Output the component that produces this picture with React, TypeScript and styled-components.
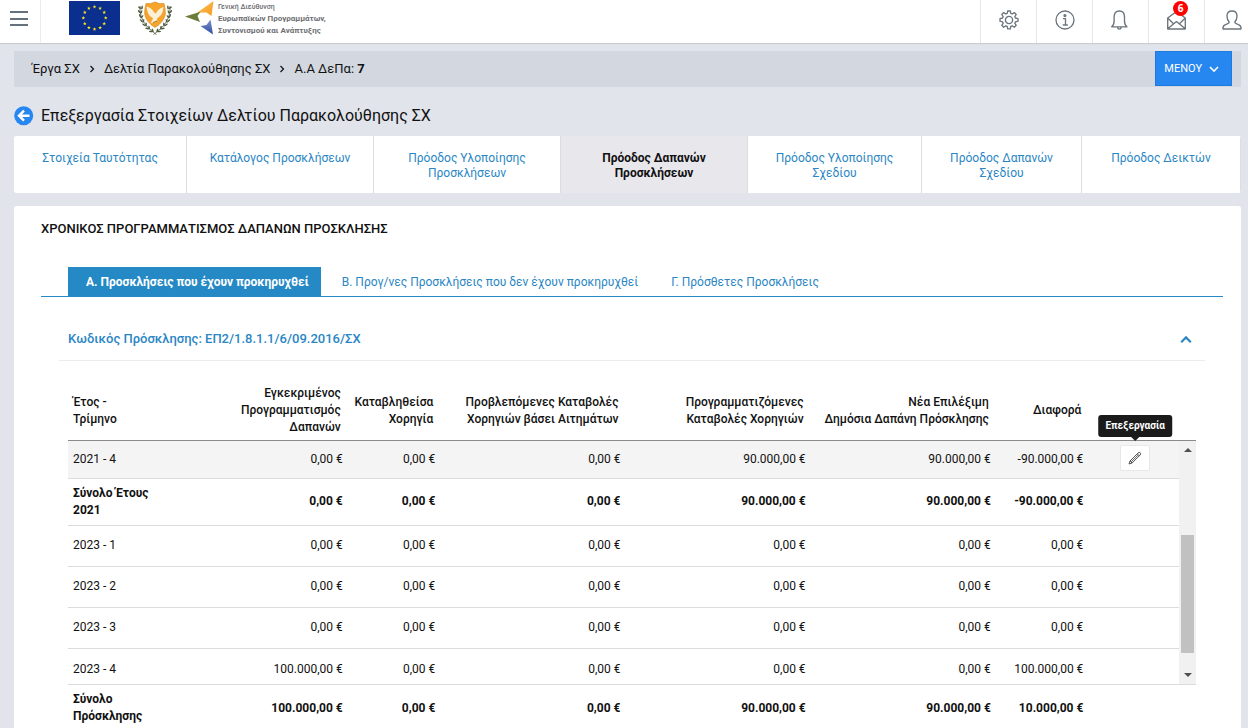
import React from "react";
import styled, { createGlobalStyle } from "styled-components";

const GlobalStyle = createGlobalStyle`
  *, *::before, *::after { box-sizing: border-box; }
  html, body { margin: 0; padding: 0; }
  body {
    background: #e1e4eb;
    color: #111;
    font-family: Roboto, "Liberation Sans", sans-serif;
    font-size: 12px;
    line-height: 17px;
  }
  button { font-family: inherit; cursor: pointer; }
  a { text-decoration: none; color: inherit; }
  h1, h2, h3 { margin: 0; }
`;

/* ---------- top bar ---------- */

const TopBar = styled.header`
  display: flex;
  align-items: stretch;
  height: 43px;
  background: #fff;
  box-shadow: 0 1px 1px #c8cdd2;
`;

const MenuToggle = styled.button`
  display: flex;
  align-items: center;
  width: 41px;
  padding: 0 0 5px 10px;
  border: 0;
  border-right: 1px solid #eaecef;
  background: none;
`;

const Logos = styled.div`
  display: flex;
  flex: 1;
  align-items: flex-start;
  padding: 1px 0 0 28px;
`;

const EmblemBox = styled.div`
  display: flex;
  margin: 0 13px 0 18px;
`;

const Directorate = styled.a`
  display: flex;
  gap: 4px;
`;

const DirectorateName = styled.div`
  color: #6d6e71;
  font-size: 8px;
  font-weight: 700;
  line-height: 12px;
  white-space: nowrap;
`;

const DirectorateSmall = styled.div`
  font-size: 7px;
  font-weight: 500;
`;

const Actions = styled.nav`
  display: flex;
`;

const Action = styled.button`
  position: relative;
  display: flex;
  align-items: center;
  padding: 0 17px 3px 18px;
  border: 0;
  border-left: 1px solid #e6e8eb;
  background: none;
  color: #6c757d;

  &:last-child { padding: 0 6px 3px 17px; }
`;

const Badge = styled.span`
  position: absolute;
  top: 1px;
  right: 16px;
  width: 15px;
  height: 15px;
  border-radius: 8px;
  background: #f00;
  color: #fff;
  font-family: "Open Sans", sans-serif;
  font-size: 10px;
  font-weight: 700;
  line-height: 15px;
  text-align: center;
`;

/* ---------- page ---------- */

const Page = styled.main`
  padding: 8px 7px 0 14px;
`;

const CrumbBar = styled.div`
  display: flex;
  justify-content: space-between;
  height: 36px;
  padding: 0 9px 0 18px;
  background: #d3d7df;
`;

const Crumbs = styled.nav`
  display: flex;
  align-items: center;
  gap: 7px;
  padding-bottom: 1px;
  font-size: 13px;
  white-space: nowrap;
`;

const MenuButton = styled.button`
  display: flex;
  align-items: center;
  gap: 7px;
  height: 35px;
  padding: 0 12px 0 8px;
  border: 1px solid #1f7ae0;
  background: #2787f0;
  color: #fff;
  font-size: 11px;
`;

const TitleRow = styled.div`
  display: flex;
  align-items: center;
  gap: 7px;
  height: 49px;
  padding-top: 9px;
`;

const BackLink = styled.a`
  display: flex;
`;

const Title = styled.h1`
  font-size: 16px;
  font-weight: 400;
  line-height: 24px;
`;

const StepTabs = styled.nav`
  display: grid;
  grid-template-columns: 173fr 187fr 187fr 187fr 174fr 160fr 159fr;
  min-height: 57px;
  border-radius: 3px;
  background: #fff;
  overflow: hidden;
`;

const StepTab = styled.a<{ $active?: boolean }>`
  padding: 15px 20px 12px;
  border-right: 1px solid #dcdde1;
  background: ${(p) => (p.$active ? "#e8e7ec" : "#fff")};
  color: ${(p) => (p.$active ? "#111" : "#2a86c4")};
  font-weight: ${(p) => (p.$active ? 700 : 400)};
  line-height: 15px;
  text-align: center;
`;

const Line = styled.span`
  display: block;
`;

const Panel = styled.section`
  margin-top: 13px;
  padding: 14px 18px 0 27px;
  border-radius: 3px 3px 0 0;
  background: #fff;
`;

const PanelTitle = styled.h2`
  font-size: 13px;
  font-weight: 500;
  line-height: 17px;
`;

const SubTabs = styled.div`
  display: flex;
  gap: 3px;
  margin-top: 30px;
  padding-left: 27px;
  border-bottom: 1px solid #2489c5;
`;

const SubTab = styled.button<{ $active?: boolean }>`
  height: 29px;
  padding: 0 12px 0 18px;
  border: 0;
  background: ${(p) => (p.$active ? "#2489c5" : "transparent")};
  color: ${(p) => (p.$active ? "#fff" : "#2a86c4")};
  font-size: 12px;
  font-weight: ${(p) => (p.$active ? 700 : 400)};
`;

const Accordion = styled.div`
  margin: 19px 18px 0;
`;

const AccordionHead = styled.button`
  display: flex;
  align-items: center;
  justify-content: space-between;
  width: 100%;
  height: 45px;
  padding: 0 13px 0 9px;
  border: 0;
  border-bottom: 1px solid #ececec;
  background: none;
  color: #2a86c4;
  font-size: 13px;
  font-weight: 500;
`;

const AccordionBody = styled.div`
  padding: 20px 9px 0;
`;

/* ---------- table ---------- */

const Table = styled.table`
  width: 100%;
  border-collapse: collapse;
  table-layout: fixed;
`;

const HeadArea = styled.div`
  height: 60px;
  padding-right: 17px;
  border-bottom: 1px solid #8a8a8a;
`;

const BodyArea = styled.div`
  display: flex;
`;

const BodyTable = styled.div`
  flex: 1;
  min-width: 0;
`;

const FootArea = styled.div`
  padding-right: 17px;
  border-top: 1px solid #dcdcdc;
`;

const Row = styled.tr<{ $height?: number; $shaded?: boolean; $strong?: boolean; $cut?: boolean }>`
  height: ${(p) => p.$height ?? 41}px;
  background: ${(p) => (p.$shaded ? "#f4f4f4" : "transparent")};
  font-weight: ${(p) => (p.$strong ? 700 : 400)};
  vertical-align: ${(p) => (p.$cut ? "bottom" : "middle")};

  &:not(:last-child) { border-bottom: 1px solid #dcdcdc; }
`;

const Cell = styled.td`
  padding: 6px 3px;
  text-align: right;
  white-space: nowrap;
`;

const ActionCell = styled.td`
  padding: 3px 0 6px 5px;
`;

const RowHead = styled.th`
  padding: 6px 5px;
  font-weight: inherit;
  text-align: left;
`;

const ColHead = styled.th<{ $left?: boolean }>`
  padding: 4px 5px 3px;
  font-weight: 500;
  text-align: ${(p) => (p.$left ? "left" : "right")};
  white-space: nowrap;
`;

const EditWrap = styled.div`
  position: relative;
  display: flex;
  justify-content: center;
`;

const EditButton = styled.button`
  display: flex;
  align-items: center;
  justify-content: center;
  width: 30px;
  height: 26px;
  padding: 0;
  border: 1px solid #e8e8e8;
  border-radius: 2px;
  background: #fff;
`;

const Tooltip = styled.span`
  position: absolute;
  bottom: 34px;
  left: 50%;
  padding: 0 7px;
  border-radius: 3px;
  background: #1b1b1b;
  color: #fff;
  font-size: 10px;
  font-weight: 700;
  line-height: 22px;
  transform: translateX(-50%);

  &::after {
    content: "";
    position: absolute;
    top: 100%;
    left: 50%;
    margin-left: -4px;
    border: 4px solid transparent;
    border-top-color: #1b1b1b;
    border-bottom: 0;
  }
`;

const ScrollTrack = styled.div`
  display: flex;
  flex-direction: column;
  align-items: center;
  justify-content: space-between;
  width: 17px;
  padding: 6px 0;
  background: #f1f1f1;
`;

const ScrollThumb = styled.div`
  width: 13px;
  height: 118px;
  margin-top: 62px;
  background: #c1c1c1;
`;

/* ---------- drawings ---------- */

const Hamburger = () => (
  <svg width="18" height="16" viewBox="0 0 18 16" stroke="#66717b" strokeWidth="2">
    <path d="M0 1h18M0 8h18M0 14h18" />
  </svg>
);

const starPoints = (cx: number, cy: number, r: number) =>
  Array.from({ length: 10 }, (_, i) => {
    const a = (Math.PI / 5) * i - Math.PI / 2;
    const d = i % 2 ? r * 0.4 : r;
    return `${(cx + d * Math.cos(a)).toFixed(2)},${(cy + d * Math.sin(a)).toFixed(2)}`;
  }).join(" ");

const EuFlag = () => (
  <svg width="51" height="34" viewBox="0 0 51 34" role="img" aria-label="EU">
    <rect width="51" height="34" fill="#0a2f8f" />
    {Array.from({ length: 12 }, (_, i) => {
      const a = (Math.PI / 6) * i;
      return (
        <polygon
          key={i}
          fill="#ffe71a"
          points={starPoints(25.5 + 11.2 * Math.sin(a), 17 - 11.2 * Math.cos(a), 2)}
        />
      );
    })}
  </svg>
);

const wreath: Array<[number, number, number]> = [
  [2.5, 6, -30], [2, 10, -10], [3, 14.5, 5], [4, 19, -15], [6.5, 23, -30], [9.5, 26.5, -45], [13, 29.5, -55],
];

const Emblem = () => (
  <svg width="34" height="35" viewBox="0 0 34 35" role="img" aria-label="Κύπρος">
    {[false, true].map((flip) => (
      <g key={String(flip)} transform={flip ? "matrix(-1 0 0 1 34 0)" : undefined}>
        <path d="M2 5C1.5 15 5 24 18.5 33.5" fill="none" stroke="#4c5a3c" strokeWidth="0.8" />
        {wreath.map(([x, y, r], i) => (
          <g key={i} transform={`translate(${x} ${y}) rotate(${r})`} fill="#4f5d3e">
            <ellipse cx="-1" cy="0" rx="0.8" ry="2" transform="rotate(-30)" />
            <ellipse cx="1.6" cy="0.4" rx="0.8" ry="2" transform="rotate(35)" />
          </g>
        ))}
      </g>
    ))}
    <path
      d="M8 2.500Q12.500 3.500 17 1Q21.500 3.500 26 2.500Q27.500 8 27.300 13Q26 21 17 26.500Q8 21 6.700 13Q6.500 8 8 2.500Z"
      fill="#f6a42c"
      stroke="#d98a1c"
      strokeWidth="0.7"
    />
    <path
      d="M8.500 5.500Q14 7 16.200 11.500L18 12.500Q20 7.500 25.500 6Q25 14 19.500 17L18.500 20L12.500 22.500L15 17.500Q9 14 8.500 5.500Z"
      fill="#fdf0d8"
    />
    <path d="M15 21.500l4-1.500" stroke="#8a7a3a" strokeWidth="0.8" />
  </svg>
);

const DirectorateMark = () => (
  <svg width="29" height="35" viewBox="0 0 29 35" aria-hidden="true">
    <defs>
      <linearGradient id="sun" x1="0" y1="0" x2="1" y2="1">
        <stop offset="0" stopColor="#fdc35a" />
        <stop offset="1" stopColor="#f59a1f" />
      </linearGradient>
      <linearGradient id="sea" x1="0" y1="0" x2="0" y2="1">
        <stop offset="0" stopColor="#7d92cc" />
        <stop offset="1" stopColor="#2c4ea0" />
      </linearGradient>
    </defs>
    <path d="M28.500 0L12 11.800L21.500 11.500L26.500 15Z" fill="url(#sun)" />
    <path d="M0 15.500L15.500 10.800L12.500 15L15 21Z" fill="#6b7c38" />
    <path d="M28 33.500L15.500 25L21.500 24L25.500 18.500Z" fill="url(#sea)" />
  </svg>
);

const lineIcon = {
  width: 20,
  height: 20,
  viewBox: "0 0 20 20",
  fill: "none",
  stroke: "currentColor",
  strokeWidth: 1.35,
  strokeLinejoin: "round" as const,
  "aria-hidden": true,
};

const GearIcon = () => (
  <svg {...lineIcon}>
    <circle cx="10" cy="10" r="3.600" />
    <path d="M8.700 1h2.600l.5 2.400 1.400.6 2.100-1.400 1.900 1.900-1.400 2.100.6 1.400 2.600.6v2.600l-2.600.6-.6 1.400 1.400 2.100-1.900 1.900-2.100-1.400-1.400.6-.5 2.500H8.700l-.5-2.500-1.400-.6-2.100 1.400-1.900-1.900 1.400-2.100-.6-1.400L1 11.200V8.600L3.600 8l.6-1.400-1.400-2.100 1.900-1.900L6.800 4l1.400-.6z" />
  </svg>
);

const InfoIcon = () => (
  <svg {...lineIcon}>
    <circle cx="10" cy="10" r="9" />
    <circle cx="9.900" cy="5.600" r="0.900" fill="currentColor" />
    <path d="M8 8.600h2.500v6.200M7.800 15h5" />
  </svg>
);

const BellIcon = () => (
  <svg {...lineIcon} viewBox="1 0 20 20">
    <path d="M1.700 16.800c2-1.500 2.400-3 2.400-5.800V7C4.100 3 6 1 9.300 1s5.200 2 5.200 6v4c0 2.800.4 4.300 2.400 5.800zM7.500 17.200c.3 2.600 3.400 2.600 3.700 0" />
  </svg>
);

const MailIcon = () => (
  <svg {...lineIcon} viewBox="1 0 20 20">
    <path d="M1.700 8L10.500 1.500 19.300 8v11H1.700zM1.700 8l6.300 6.200M19.300 8L13 14.200M2 18.500l8.500-6.900 8.500 6.900" />
  </svg>
);

const UserIcon = () => (
  <svg {...lineIcon}>
    <path d="M1 19c-.3-2.700.6-3.600 2.500-4.300 2.600-.9 3.700-1.400 3.700-2.700-1.500-1.500-2.200-3.700-2.200-6C5 2.600 7 1 10 1s5 1.600 5 5c0 2.300-.7 4.500-2.200 6 0 1.300 1.100 1.800 3.700 2.700 1.900.7 2.800 1.600 2.500 4.300z" />
  </svg>
);

const Chevron = ({ dir, size = 10 }: { dir: "up" | "down" | "right"; size?: number }) => (
  <svg width={size} height={size} viewBox="0 0 10 10" fill="none" stroke="currentColor" aria-hidden="true">
    {dir === "up" && <path d="M1 8.500l4-4 4 4" strokeWidth="1.800" />}
    {dir === "down" && <path d="M1 3l4 4 4-4" strokeWidth="1.600" />}
    {dir === "right" && <path d="M3.500 2l3 3-3 3" strokeWidth="1.200" />}
  </svg>
);

const BackIcon = () => (
  <svg width="20" height="20" viewBox="0 0 20 20" aria-hidden="true">
    <circle cx="9.700" cy="9.700" r="9.500" fill="#2787f0" />
    <path d="M15.500 9.700H5.500M10 4.700l-5 5 5 5" fill="none" stroke="#fff" strokeWidth="2.400" />
  </svg>
);

const PencilIcon = () => (
  <svg width="14" height="14" viewBox="0 0 14 14" fill="none" stroke="#444" strokeWidth="0.900" aria-hidden="true">
    <path d="M1 13l1-3L10 2q1.200-1.100 2.200-.2t-.1 2.200L4.100 12zM2 10l2.100 2M9.200 2.800l2.100 2.100M3.200 10.900L10.200 4" />
  </svg>
);

const ScrollArrow = ({ down }: { down?: boolean }) => (
  <svg width="8" height="6" viewBox="0 0 8 6" fill="#505050" aria-hidden="true">
    <path d={down ? "M0 1h8L4 5z" : "M0 5h8L4 1z"} />
  </svg>
);

/* ---------- data ---------- */

const steps: Array<{ lines: string[]; active?: boolean }> = [
  { lines: ["Στοιχεία Ταυτότητας"] },
  { lines: ["Κατάλογος Προσκλήσεων"] },
  { lines: ["Πρόοδος Υλοποίησης", "Προσκλήσεων"] },
  { lines: ["Πρόοδος Δαπανών", "Προσκλήσεων"], active: true },
  { lines: ["Πρόοδος Υλοποίησης", "Σχεδίου"] },
  { lines: ["Πρόοδος Δαπανών", "Σχεδίου"] },
  { lines: ["Πρόοδος Δεικτών"] },
];

const subTabs = [
  "Α. Προσκλήσεις που έχουν προκηρυχθεί",
  "Β. Προγ/νες Προσκλήσεις που δεν έχουν προκηρυχθεί",
  "Γ. Πρόσθετες Προσκλήσεις",
];

const columns: string[][] = [
  ["Έτος -", "Τρίμηνο"],
  ["Εγκεκριμένος", "Προγραμματισμός", "Δαπανών"],
  ["Καταβληθείσα", "Χορηγία"],
  ["Προβλεπόμενες Καταβολές", "Χορηγιών βάσει Αιτημάτων"],
  ["Προγραμματιζόμενες", "Καταβολές Χορηγιών"],
  ["Νέα Επιλέξιμη", "Δημόσια Δαπάνη Πρόσκλησης"],
  ["Διαφορά"],
];

type Entry = {
  label: string;
  values: string[];
  height?: number;
  strong?: boolean;
  editable?: boolean;
  cut?: boolean;
};

const zero = "0,00 €";

const entries: Entry[] = [
  { label: "2021 - 4", values: [zero, zero, zero, "90.000,00 €", "90.000,00 €", "-90.000,00 €"], height: 37, editable: true },
  { label: "Σύνολο Έτους 2021", values: [zero, zero, zero, "90.000,00 €", "90.000,00 €", "-90.000,00 €"], height: 46, strong: true },
  { label: "2023 - 1", values: [zero, zero, zero, zero, zero, zero] },
  { label: "2023 - 2", values: [zero, zero, zero, zero, zero, zero] },
  { label: "2023 - 3", values: [zero, zero, zero, zero, zero, zero] },
  { label: "2023 - 4", values: ["100.000,00 €", zero, zero, zero, zero, "100.000,00 €"], height: 36, cut: true },
];

const total: Entry = {
  label: "Σύνολο Πρόσκλησης",
  values: ["100.000,00 €", zero, zero, "90.000,00 €", "90.000,00 €", "10.000,00 €"],
  height: 44,
  strong: true,
};

const twelfths = [1, 2, 1, 2, 2, 2, 1, 1];

const Columns = () => (
  <colgroup>
    {twelfths.map((n, i) => (
      <col key={i} style={{ width: `${(n / 12) * 100}%` }} />
    ))}
  </colgroup>
);

const EntryRow = ({ entry }: { entry: Entry }) => (
  <Row $height={entry.height} $shaded={entry.editable} $strong={entry.strong} $cut={entry.cut}>
    <RowHead scope="row">{entry.label}</RowHead>
    {entry.values.map((v, i) => (
      <Cell key={i}>{v}</Cell>
    ))}
    <ActionCell>
      {entry.editable && (
        <EditWrap>
          <EditButton aria-label="Επεξεργασία">
            <PencilIcon />
          </EditButton>
          <Tooltip role="tooltip">Επεξεργασία</Tooltip>
        </EditWrap>
      )}
    </ActionCell>
  </Row>
);

export default function App() {
  return (
    <>
      <GlobalStyle />
      <TopBar>
        <MenuToggle aria-label="Πλοήγηση">
          <Hamburger />
        </MenuToggle>
        <Logos>
          <EuFlag />
          <EmblemBox>
            <Emblem />
          </EmblemBox>
          <Directorate href="#">
            <DirectorateMark />
            <DirectorateName>
              <DirectorateSmall>Γενική Διεύθυνση</DirectorateSmall>
              <div>Ευρωπαϊκών Προγραμμάτων,</div>
              <div>Συντονισμού και Ανάπτυξης</div>
            </DirectorateName>
          </Directorate>
        </Logos>
        <Actions>
          <Action aria-label="Ρυθμίσεις"><GearIcon /></Action>
          <Action aria-label="Πληροφορίες"><InfoIcon /></Action>
          <Action aria-label="Ειδοποιήσεις"><BellIcon /></Action>
          <Action aria-label="Μηνύματα">
            <MailIcon />
            <Badge>6</Badge>
          </Action>
          <Action aria-label="Χρήστης"><UserIcon /></Action>
        </Actions>
      </TopBar>

      <Page>
        <CrumbBar>
          <Crumbs>
            <a href="#">Έργα ΣΧ</a>
            <Chevron dir="right" />
            <a href="#">Δελτία Παρακολούθησης ΣΧ</a>
            <Chevron dir="right" />
            <span>Α.Α ΔεΠα: <b>7</b></span>
          </Crumbs>
          <MenuButton>
            ΜΕΝΟΥ <Chevron dir="down" />
          </MenuButton>
        </CrumbBar>

        <TitleRow>
          <BackLink href="#" aria-label="Επιστροφή"><BackIcon /></BackLink>
          <Title>Επεξεργασία Στοιχείων Δελτίου Παρακολούθησης ΣΧ</Title>
        </TitleRow>

        <StepTabs>
          {steps.map((s, i) => (
            <StepTab key={i} href="#" $active={s.active}>
              {s.lines.map((l) => (
                <Line key={l}>{l}</Line>
              ))}
            </StepTab>
          ))}
        </StepTabs>

        <Panel>
          <PanelTitle>ΧΡΟΝΙΚΟΣ ΠΡΟΓΡΑΜΜΑΤΙΣΜΟΣ ΔΑΠΑΝΩΝ ΠΡΟΣΚΛΗΣΗΣ</PanelTitle>
          <SubTabs role="tablist">
            {subTabs.map((t, i) => (
              <SubTab key={t} role="tab" aria-selected={i === 0} $active={i === 0}>
                {t}
              </SubTab>
            ))}
          </SubTabs>

          <Accordion>
            <AccordionHead aria-expanded="true">
              <span>Κωδικός Πρόσκλησης: ΕΠ2/1.8.1.1/6/09.2016/ΣΧ</span>
              <Chevron dir="up" size={12} />
            </AccordionHead>
            <AccordionBody>
              <HeadArea>
                <Table>
                  <Columns />
                  <thead>
                    <tr>
                      {columns.map((lines, i) => (
                        <ColHead key={i} scope="col" $left={i === 0}>
                          {lines.map((l) => (
                            <Line key={l}>{l}</Line>
                          ))}
                        </ColHead>
                      ))}
                      <td />
                    </tr>
                  </thead>
                </Table>
              </HeadArea>
              <BodyArea>
                <BodyTable>
                  <Table>
                    <Columns />
                    <tbody>
                      {entries.map((e) => (
                        <EntryRow key={e.label} entry={e} />
                      ))}
                    </tbody>
                  </Table>
                </BodyTable>
                <ScrollTrack>
                  <ScrollArrow />
                  <ScrollThumb />
                  <ScrollArrow down />
                </ScrollTrack>
              </BodyArea>
              <FootArea>
                <Table>
                  <Columns />
                  <tbody>
                    <EntryRow entry={total} />
                  </tbody>
                </Table>
              </FootArea>
            </AccordionBody>
          </Accordion>
        </Panel>
      </Page>
    </>
  );
}
